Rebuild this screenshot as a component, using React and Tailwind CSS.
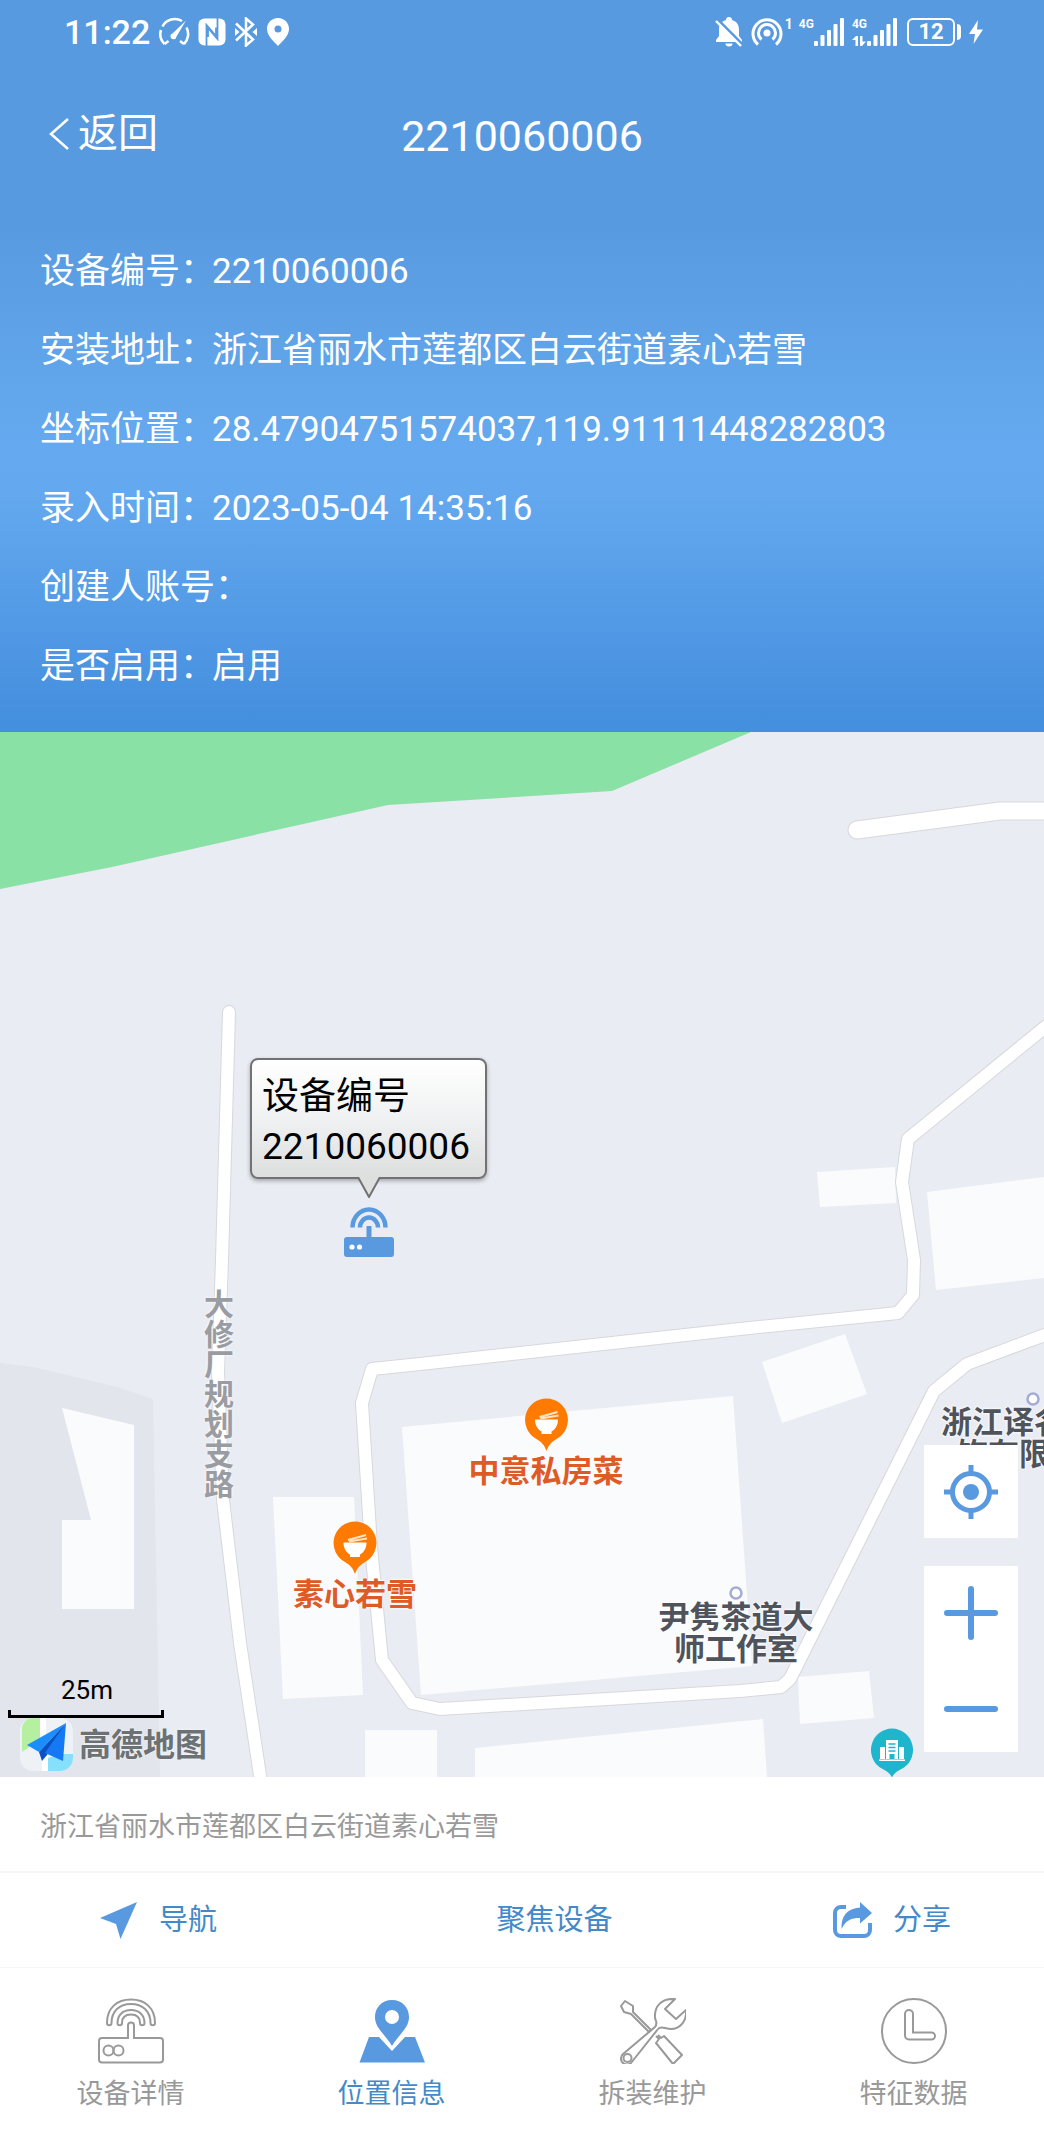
import React, { useState } from 'react';

const deviceInfo = [
  { label: '设备编号', value: '2210060006' },
  { label: '安装地址', value: '浙江省丽水市莲都区白云街道素心若雪' },
  { label: '坐标位置', value: '28.47904751574037,119.91111448282803' },
  { label: '录入时间', value: '2023-05-04 14:35:16' },
  { label: '创建人账号', value: '' },
  { label: '是否启用', value: '启用' },
];

function SignalBars() {
  return (
    <svg className="w-[30px] h-7" viewBox="0 0 30 28" fill="currentColor" aria-hidden="true">
      <rect x="0" y="23" width="4" height="5" rx="1" />
      <rect x="6.5" y="17" width="4" height="11" rx="1" />
      <rect x="13" y="12" width="4" height="16" rx="1" />
      <rect x="19.5" y="6" width="4" height="22" rx="1" />
      <rect x="26" y="0" width="4" height="28" rx="1" />
    </svg>
  );
}

function StatusBar() {
  return (
    <div className="h-16 flex items-center justify-between pl-16 pr-[61px]">
      <div className="flex items-center gap-2">
        <span className="text-[34px] leading-none font-medium">11:22</span>
        <svg className="w-8 h-[30px]" viewBox="0 0 32 30" fill="none" stroke="currentColor" strokeWidth="2.6" aria-hidden="true">
          <path d="M6.5 27A14 14 0 0 1 3 13M4.5 9.5A14 14 0 0 1 24 4M28.5 10.5A14 14 0 0 1 26 27M6.5 27l4-3M26 27l-4-3" />
          <path d="M28 3.5L18.5 19.5a3 3 0 1 1-4-3z" fill="currentColor" stroke="none" />
        </svg>
        <svg className="w-7 h-7" viewBox="0 0 28 28" aria-hidden="true">
          <rect x="0.5" y="0.5" width="27" height="27" rx="6" fill="currentColor" />
          <path d="M8.500 28V7L18 18V9.500M19.500 0v21L10 10v9" fill="none" stroke="#589adf" strokeWidth="1.800" />
        </svg>
        <svg className="w-6 h-[30px]" viewBox="0 0 24 30" fill="none" stroke="currentColor" strokeWidth="2.5" aria-hidden="true">
          <path d="M2 6.5L19 22.5L12 28.500V1.500L19 7.500L2 23.500" />
          <path d="M1 11l4.500 4L1 19zM23 11l-4.500 4l4.500 4z" fill="currentColor" stroke="none" />
        </svg>
        <svg className="w-6 h-7" viewBox="0 0 24 28" aria-hidden="true">
          <path d="M12 0C5.400 0 1 5 1 11c0 7 7 12.500 11 17c4-4.500 11-10 11-17C23 5 18.600 0 12 0zm0 7.500a3.500 3.500 0 1 1 0 7a3.500 3.500 0 0 1 0-7z" fill="currentColor" fillRule="evenodd" />
        </svg>
      </div>

      <div className="flex items-center">
        <svg className="w-7 h-[30px] mr-2" viewBox="0 0 28 30" aria-hidden="true">
          <path d="M11 3a3 3 0 0 1 6 0c5 1.500 7 5 7 10v6l3 4v2H1v-2l3-4v-6c0-5 2-8.500 7-10z" fill="currentColor" />
          <path d="M10.500 26.500h7a3.500 3 0 0 1-7 0z" fill="currentColor" />
          <path d="M0 0L28 28" stroke="#589adf" strokeWidth="3" />
          <path d="M1 4L26 29" stroke="currentColor" strokeWidth="2.400" />
        </svg>
        <svg className="w-8 h-[30px]" viewBox="0 0 32 30" fill="none" stroke="currentColor" strokeWidth="3" aria-hidden="true">
          <path d="M7 27.500A14 14 0 1 1 25 27.500" />
          <path d="M10.500 22.500A8.500 8.500 0 1 1 21.500 22.500" />
          <circle cx="16" cy="16" r="3.500" fill="currentColor" stroke="none" />
        </svg>
        <span className="self-start text-sm leading-none font-bold ml-0.5 mr-1.5">1</span>
        <div className="flex h-7 mr-2">
          <span className="text-xs leading-none font-bold">4G</span>
          <SignalBars />
        </div>
        <div className="flex h-7 mr-2.5">
          <div className="flex flex-col justify-between">
            <span className="text-xs leading-none font-bold">4G</span>
            <svg className="w-3.5 h-2.5" viewBox="0 0 14 10" fill="currentColor" aria-hidden="true">
              <path d="M0 4L4 0h2v10H3.500V4zM8 0h2.500v5.500H14L10 10H8z" />
            </svg>
          </div>
          <SignalBars />
        </div>
        <div className="w-12 h-7 border-2 border-white rounded-md flex items-center justify-center text-[22px] leading-none font-bold">
          12
        </div>
        <span className="w-1 h-4 bg-white rounded-r-sm ml-0.5 mr-2" />
        <svg className="w-3.5 h-6" viewBox="0 0 14 24" fill="currentColor" aria-hidden="true">
          <path d="M9 0L0 14h6l-1.500 10L14 9.500H8z" />
        </svg>
      </div>
    </div>
  );
}

function Header() {
  return (
    <header className="text-white bg-[linear-gradient(180deg,#589adf_0%,#589adf_30%,#65aaf0_62%,#64a9ef_67%,#458fdf_98%)] pb-[26px]">
      <StatusBar />
      <div className="h-[140px] grid grid-cols-3 items-center px-12">
        <button type="button" className="flex items-center gap-2 text-[40px] leading-none">
          <svg className="w-[22px] h-8" viewBox="0 0 22 32" fill="none" stroke="currentColor" strokeWidth="2.5" aria-hidden="true">
            <path d="M20 1L3 16L20 31" />
          </svg>
          返回
        </button>
        <h1 className="pt-1 text-center text-[43px] leading-none">2210060006</h1>
      </div>
      <dl className="pt-7 px-10 text-[35px] leading-[79px]">
        {deviceInfo.map((item) => (
          <div key={item.label} className="flex">
            <dt className="w-[172px] shrink-0 whitespace-nowrap">{item.label}：</dt>
            <dd>{item.value}</dd>
          </div>
        ))}
      </dl>
    </header>
  );
}

function MapBase() {
  const roads = [
    '229,280 222,528 218,640 223,768 240,911 261,1050',
    '1050,291 908,407 902,450 914,528 913,563 898,581 740,597 420,632 372,637 362,671 371,815 382,928 412,971 440,977 740,959 781,955 790,947 934,659 967,632 1050,601',
  ];
  const buildings = [
    '817,440 895,435 896,471 820,475',
    '927,460 1044,445 1044,546 936,558',
    '762,630 845,602 867,662 782,691',
    '402,695 733,664 752,934 421,963',
    '273,765 354,765 363,963 283,967',
    '62,676 134,693 134,877 62,877 62,788 91,788',
    '365,998 437,998 437,1045 365,1045',
    '475,1016 763,987 767,1045 475,1045',
    '798,945 869,939 874,986 800,992',
  ];

  return (
    <svg
      className="absolute inset-0 w-full h-full"
      viewBox="0 0 1044 1045"
      preserveAspectRatio="xMinYMin slice"
      fill="none"
      strokeLinejoin="round"
      strokeLinecap="round"
      aria-hidden="true"
    >
      <polygon points="0,0 751,0 612,59 388,73 112,135 0,157" fill="#8ae1a5" />
      <polygon points="0,631 33,635 117,655 153,667 160,1045 0,1045" fill="#e2e5eb" />
      {buildings.map((points) => (
        <polygon key={points} points={points} fill="#fafbfd" />
      ))}
      <polyline points="857,98 1000,79 1050,79" stroke="#d6d8dc" strokeWidth="19" />
      <polyline points="857,98 1000,79 1050,79" stroke="#fff" strokeWidth="17" />
      {roads.map((points) => (
        <polyline key={points} points={points} stroke="#d6d8dc" strokeWidth="14" />
      ))}
      {roads.map((points) => (
        <polyline key={points} points={points} stroke="#fff" strokeWidth="12" />
      ))}
      <circle cx="736" cy="861" r="5.5" fill="#fff" stroke="#a3acd8" strokeWidth="2.5" />
      <circle cx="1033" cy="667" r="5.5" fill="#fff" stroke="#a3acd8" strokeWidth="2.5" />
    </svg>
  );
}

function FoodPin() {
  return (
    <svg className="w-11 h-[54px]" viewBox="0 0 44 54" aria-hidden="true">
      <path d="M22 0.500a21.500 21.500 0 0 1 10 40.500c-5 3-8 6-10 12c-2-6-5-9-10-12A21.500 21.500 0 0 1 22 0.500z" fill="#ff7a00" />
      <path d="M10.500 21.500h23c0 6-3 10-6.500 12v2.500H17v-2.500c-3.500-2-6.500-6-6.500-12z" fill="#fff" />
      <path d="M15 19L33 14M16 20.500L34 17.500" stroke="#ffe3c4" strokeWidth="2" />
    </svg>
  );
}

function FoodPoi({ name, className }) {
  return (
    <div className={`absolute flex flex-col items-center -translate-x-1/2 ${className}`}>
      <FoodPin />
      <span className="text-[31px] leading-10 font-bold text-[#de5a26] whitespace-nowrap [text-shadow:0_0_3px_#fff,0_0_3px_#fff]">
        {name}
      </span>
    </div>
  );
}

function DeviceMarker() {
  return (
    <div className="absolute left-[250px] top-[326px] flex flex-col items-center">
      <div className="w-[237px] h-[121px] pl-2.5 pt-3 rounded-lg border-2 border-[#707274] bg-linear-to-b from-white via-[#f0f1f2] to-[#dddfdf] shadow-[0_2px_4px_rgba(0,0,0,0.3)] text-[37px] leading-[50px] text-black">
        <p>设备编号</p>
        <p>2210060006</p>
      </div>
      <svg className="relative -mt-0.5 w-6 h-[22px]" viewBox="0 0 24 22" aria-hidden="true">
        <path d="M1 0L12 20L23 0" fill="#dee0e0" stroke="#707274" strokeWidth="2" strokeLinejoin="round" />
      </svg>
      <svg className="w-[50px] h-[50px] mt-2" viewBox="0 0 50 50" fill="none" stroke="#5899df" strokeWidth="4.500" aria-hidden="true">
        <rect x="0" y="30" width="50" height="20" rx="3" fill="#5899df" stroke="none" />
        <path d="M25 32V19" strokeWidth="5" />
        <path d="M8.500 20.500a16.500 18 0 0 1 33 0" />
        <path d="M16 20.500a9 10 0 0 1 18 0" />
        <circle cx="8" cy="40" r="2.600" fill="#fff" stroke="none" />
        <circle cx="15.500" cy="40" r="2.600" fill="#fff" stroke="none" />
      </svg>
    </div>
  );
}

function MapControls() {
  return (
    <div className="absolute right-[26px] bottom-[25px] w-[94px] flex flex-col gap-7 text-[#5899df]">
      <button type="button" aria-label="定位" className="h-[93px] bg-white flex items-center justify-center">
        <svg className="w-[54px] h-[54px]" viewBox="0 0 54 54" fill="none" stroke="currentColor" strokeWidth="5" aria-hidden="true">
          <circle cx="27" cy="27" r="18.500" />
          <circle cx="27" cy="27" r="8" fill="currentColor" stroke="none" />
          <path d="M27 0v8M27 46v8M0 27h8M46 27h8" />
        </svg>
      </button>
      <div className="bg-white flex flex-col">
        <button type="button" aria-label="放大" className="h-[93px] flex items-center justify-center">
          <svg className="w-[54px] h-[54px]" viewBox="0 0 54 54" stroke="currentColor" strokeWidth="6" strokeLinecap="round" aria-hidden="true">
            <path d="M27 3v48M3 27h48" />
          </svg>
        </button>
        <button type="button" aria-label="缩小" className="h-[93px] pt-1.5 flex items-center justify-center">
          <svg className="w-[54px] h-[54px]" viewBox="0 0 54 54" stroke="currentColor" strokeWidth="6" strokeLinecap="round" aria-hidden="true">
            <path d="M3 27h48" />
          </svg>
        </button>
      </div>
    </div>
  );
}

function MapScale() {
  return (
    <div className="absolute left-2 bottom-1.5 text-black">
      <div className="w-[156px]">
        <p className="text-center text-[26px] leading-10 pl-0.5">25m</p>
        <div className="h-2 border-x-3 border-b-3 border-black" />
      </div>
      <div className="flex items-center gap-1.5 pl-3">
        <svg className="w-[53px] h-[53px]" viewBox="0 0 53 53" aria-hidden="true">
          <rect width="53" height="53" rx="13" fill="#eef2f7" />
          <path d="M13 0h7v22L2 34V11A11 11 0 0 1 13 0z" fill="#b4f0a0" />
          <path d="M20 0h6v20l-6 4zM22 36h6v17h-6z" fill="#fff" />
          <path d="M28 40l14-4h11v4a13 13 0 0 1-13 13H28z" fill="#86e0fb" />
          <path d="M46 5L7 27l12 7z" fill="#1b8dfc" />
          <path d="M46 5L19 34l3 9l5-6z" fill="#0a52c4" />
          <path d="M46 5L25 35l18 8z" fill="#1479f2" />
        </svg>
        <span className="text-[32px] leading-none font-bold text-[#6c7274] [text-shadow:0_0_2px_#fff]">高德地图</span>
      </div>
    </div>
  );
}

function MapView() {
  return (
    <section className="relative flex-1 min-h-[1045px] overflow-hidden bg-[#e9ecf2]" aria-label="地图">
      <MapBase />

      <div className="absolute left-[204px] top-[558px] w-[30px] text-[30px] leading-[30px] font-bold text-[#999ca2] break-all [text-shadow:0_0_3px_#fff]">
        大修厂规划支路
      </div>

      <FoodPoi name="中意私房菜" className="left-[546px] top-[666px]" />
      <FoodPoi name="素心若雪" className="left-[355px] top-[789px]" />

      <p className="absolute left-[736px] top-[870px] -translate-x-1/2 text-center whitespace-nowrap text-[31px] leading-8 font-bold text-[#4f535c] [text-shadow:0_0_3px_#fff,0_0_3px_#fff]">
        尹隽茶道大<br />师工作室
      </p>
      <p className="absolute left-[941px] top-[675px] whitespace-nowrap text-[31px] leading-8 font-bold text-[#4f535c] [text-shadow:0_0_3px_#fff,0_0_3px_#fff]">
        浙江译名
        <span className="block pl-4">饰有限</span>
      </p>

      <svg className="absolute left-[870px] top-[996px] w-11 h-[50px]" viewBox="0 0 44 50" aria-hidden="true">
        <path d="M22 0.500a21.500 21.500 0 0 1 12 39c-5 3-10 5-12 10c-2-5-7-7-12-10A21.500 21.500 0 0 1 22 0.500z" fill="#1fb5cd" />
        <path d="M16 12h12v19h-3.500v-5h-5v5H16zM10 19h5v12h-5zM29 19h5v12h-5zM9 31.500h26v1.500H9z" fill="#fff" />
        <path d="M18.500 16h7M18.500 19.500h7M18.500 23h7" stroke="#1fb5cd" strokeWidth="1.500" />
      </svg>

      <DeviceMarker />
      <MapControls />
      <MapScale />
    </section>
  );
}

function Actions() {
  return (
    <div className="h-[97px] border-t-2 border-b border-[#f5f6f7] flex items-center justify-between pl-[100px] pr-[93px] text-[29px] leading-none text-[#4489c8]">
      <button type="button" className="flex items-center gap-[22px]">
        <svg className="w-[37px] h-[37px]" viewBox="0 0 37 37" fill="#5899df" aria-hidden="true">
          <path d="M37 0L20.500 37L16 22L0 16z" />
        </svg>
        导航
      </button>
      <button type="button" className="pl-[59px]">聚焦设备</button>
      <button type="button" className="flex items-center gap-5">
        <svg className="w-10 h-9" viewBox="0 0 40 36" fill="none" aria-hidden="true">
          <path d="M13 5H8a6 6 0 0 0-6 6v17a6 6 0 0 0 6 6h23a6 6 0 0 0 6-6v-7" stroke="#5899df" strokeWidth="4" />
          <path d="M27 0L39 11L27 21.500V16C18 16 13 18 8.500 27C8 14 14 6.500 27 5.500z" fill="#5899df" />
        </svg>
        分享
      </button>
    </div>
  );
}

function RouterIcon() {
  return (
    <svg className="w-[66px] h-[66px]" viewBox="0 0 66 66" fill="none" stroke="currentColor" strokeWidth="2" aria-hidden="true">
      <path d="M30 40H4a3 3 0 0 0-3 3v18.500a3 3 0 0 0 3 3h58a3 3 0 0 0 3-3V43a3 3 0 0 0-3-3H36V27.500a3 3 0 0 0-6 0z" />
      <circle cx="10.500" cy="52.500" r="5" />
      <circle cx="20.500" cy="52.500" r="5" />
      <path d="M9 25C9 10 19 1.500 33 1.500S57 10 57 25a2 2 0 0 1-4.500 0C52.500 13 44.500 6 33 6S13.500 13 13.500 25A2 2 0 0 1 9 25z" />
      <path d="M19.500 25c0-8 5.500-13 13.500-13s13.500 5 13.500 13a2 2 0 0 1-4.500 0c0-5.500-3.500-8.500-9-8.500s-9 3-9 8.500a2 2 0 0 1-4.500 0z" />
    </svg>
  );
}

function LocationIcon() {
  return (
    <svg className="w-[66px] h-[66px]" viewBox="0 0 66 66" fill="#5899df" aria-hidden="true">
      <path d="M33 2C23 2 16 9.500 16 19c0 11 10 17 17 29c7-12 17-18 17-29C50 9.500 43 2 33 2zm0 10a7 7 0 1 1 0 14a7 7 0 0 1 0-14z" fillRule="evenodd" />
      <path d="M10 39h10l13 14l13-14h10l10 25.500H0.500z" />
    </svg>
  );
}

function ToolsIcon() {
  return (
    <svg className="w-[66px] h-[66px]" viewBox="0 0 66 66" fill="none" stroke="currentColor" strokeWidth="2" strokeLinejoin="round" aria-hidden="true">
      <path d="M55 1C42 0 34 8 35 20C36 24 38 25 35 29L3 56a6 6 0 0 0 8 9L38 31c3-4 7 0 13 0c9 0 16-8 15-19L56 21L45 11z" />
      <circle cx="7.500" cy="60" r="4" />
      <path d="M5 3L1 8l3 6l7 2L29 34l2-2L13 14l0-6z" />
      <path d="M36 38l3 3l-3 4L53 66l9-9L44 38l-3 2l-3-3" />
    </svg>
  );
}

function ClockIcon() {
  return (
    <svg className="w-[66px] h-[66px]" viewBox="0 0 66 66" fill="none" stroke="currentColor" strokeWidth="2" aria-hidden="true">
      <circle cx="33" cy="33" r="32" />
      <path d="M24 16a4 4 0 0 1 8 0v18.500h18.500a3.500 3.500 0 0 1 0 7H28a4 4 0 0 1-4-4z" />
    </svg>
  );
}

const tabs = [
  { id: 'detail', label: '设备详情', icon: RouterIcon },
  { id: 'location', label: '位置信息', icon: LocationIcon },
  { id: 'repair', label: '拆装维护', icon: ToolsIcon },
  { id: 'data', label: '特征数据', icon: ClockIcon },
];

export default function App() {
  const [activeTab, setActiveTab] = useState('location');

  return (
    <div className="min-h-screen flex flex-col bg-white font-['Roboto','Noto_Sans_CJK_SC',sans-serif]">
      <Header />
      <MapView />

      <p className="h-[94px] px-10 pt-1.5 flex items-center text-[27px] leading-none text-[#999]">
        浙江省丽水市莲都区白云街道素心若雪
      </p>
      <Actions />

      <nav className="h-[162px] pt-[30px] grid grid-cols-4">
        {tabs.map(({ id, label, icon: Icon }) => (
          <button
            key={id}
            type="button"
            onClick={() => setActiveTab(id)}
            className={`flex flex-col items-center gap-3 text-[27px] leading-9 ${
              activeTab === id ? 'text-[#4489c8]' : 'text-[#999]'
            }`}
          >
            <Icon />
            <span>{label}</span>
          </button>
        ))}
      </nav>
    </div>
  );
}
